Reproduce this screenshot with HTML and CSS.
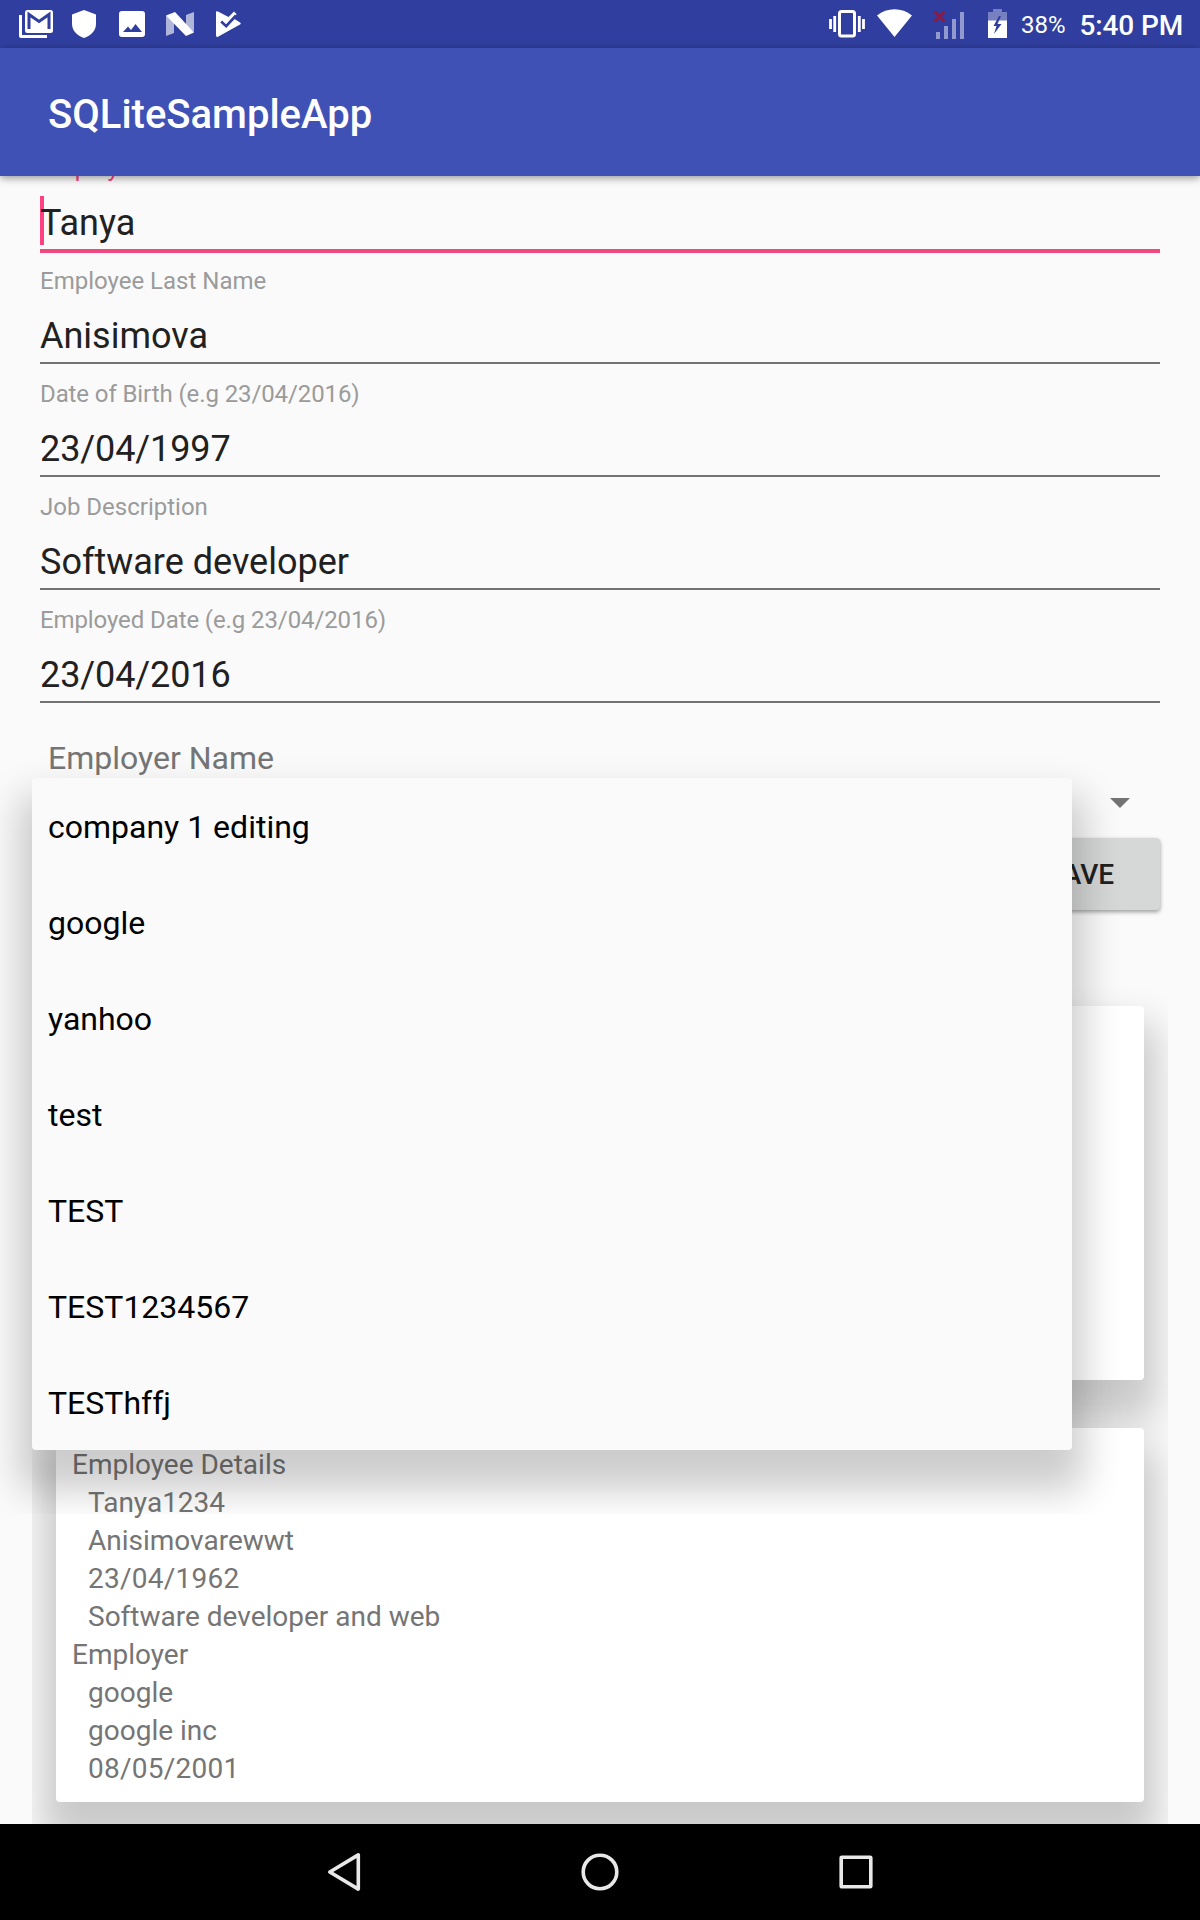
FILE: index.html
```html
<!DOCTYPE html>
<html lang="en">
<head>
<meta charset="utf-8">
<title>SQLiteSampleApp</title>
<link rel="stylesheet" href="styles.css">
</head>
<body>
<div class="screen">
  <header class="status-bar">
    <div class="notifications">
      <svg width="34" height="28" viewBox="0 0 34 28"><path d="M0 5h3v20h25v3H2a2 2 0 0 1-2-2z" fill="#fff"/><rect x="6" width="28" height="23" rx="2.5" fill="#fff"/><path d="M10 19V4.500L20 11.500 30 4.500V19" fill="none" stroke="#303f9f" stroke-width="3"/></svg>
      <svg width="24" height="28" viewBox="0 0 24 28"><path d="M12 0 24 4.500V14c0 6.500-5 11.500-12 14C5 25.500 0 20.500 0 14V4.500z" fill="#fff"/></svg>
      <svg width="26" height="26" viewBox="0 0 26 26"><path fill-rule="evenodd" d="M3 0h20a3 3 0 0 1 3 3v20a3 3 0 0 1-3 3H3a3 3 0 0 1-3-3V3a3 3 0 0 1 3-3zM4 21h19l-6.500-8-4.500 6-3-3.500z" fill="#fff"/></svg>
      <svg width="28" height="24" viewBox="0 0 28 24"><path d="M0 3.500 8 10v11l-8 3zM28 0v20l-8-6V3z" fill="#fff" opacity=".62"/><path d="M0 3.500 9 0l19 20.500L20 24z" fill="#fff"/></svg>
      <svg width="25" height="26" viewBox="0 0 25 26"><path d="M0 1.500Q0-.5 2 .6L12.500 6 18 .6 20.500 3 18.500 8 24 11.500q1.500 1 0 2L2 25.700q-2 .8-2-1.700z" fill="#fff"/><path d="m5.200 10.500 5 4.700L20 4.500" fill="none" stroke="#303f9f" stroke-width="2.700"/></svg>
    </div>
    <div class="system">
      <svg class="vibrate" width="36" height="28" viewBox="0 0 36 28"><rect x="10.500" y="1.500" width="15" height="24.500" rx="2" fill="none" stroke="#fff" stroke-width="3"/><path d="M1.500 9v10M5.700 6v16M30.300 6v16M34.500 9v10" stroke="#fff" stroke-width="2.800"/></svg>
      <svg class="wifi" width="35" height="28" viewBox="0 0 35 28"><path d="M0 6.500C10-2 25-2 35 6.500L17.500 28z" fill="#fff"/></svg>
      <svg class="signal" width="32" height="30" viewBox="0 0 32 30"><path d="M3 22h4v7H3zM11 16h4v13h-4zM19 9h4v20h-4zM27 2h4v27h-4z" fill="#9199cf"/><path d="m1.500 1.500 10 10m0-10-10 10" stroke="#861c49" stroke-width="3.200"/></svg>
      <svg class="battery" width="19" height="29" viewBox="0 0 19 29"><path d="M0 3h5V0h9v3h5v10H0z" fill="#7780c0"/><path d="M0 11.500h19V29H0z" fill="#fff"/><path d="M11 7 5.500 17h3l-2.500 8 7.500-10h-4L13 7z" fill="#303f9f"/></svg>
      <span class="percent">38%</span>
      <span class="clock">5:40 PM</span>
    </div>
  </header>
  <h1 class="app-bar">SQLiteSampleApp</h1>
  <main class="content">
    <form class="form">
      <label class="field focused"><span class="hint">Employee First Name</span><span class="value">Tanya</span></label>
      <label class="field"><span class="hint">Employee Last Name</span><span class="value">Anisimova</span></label>
      <label class="field date"><span class="hint">Date of Birth (e.g 23/04/2016)</span><span class="value">23/04/1997</span></label>
      <label class="field"><span class="hint">Job Description</span><span class="value">Software developer</span></label>
      <label class="field date"><span class="hint">Employed Date (e.g 23/04/2016)</span><span class="value">23/04/2016</span></label>
      <div class="employer-label">Employer Name</div>
      <div class="spinner"><svg width="20" height="10" viewBox="0 0 20 10"><path d="M0 0h20L10 10z" fill="#737373"/></svg></div>
      <button class="save" type="button">SAVE</button>
    </form>
    <section class="list">
      <article class="card"></article>
      <article class="card">
        <div>Employee Details</div>
        <div class="detail">Tanya1234</div>
        <div class="detail">Anisimovarewwt</div>
        <div class="detail day">23/04/1962</div>
        <div class="detail">Software developer and web</div>
        <div>Employer</div>
        <div class="detail">google</div>
        <div class="detail">google inc</div>
        <div class="detail day">08/05/2001</div>
      </article>
    </section>
  </main>
  <nav class="nav-bar">
    <svg width="40" height="40" viewBox="0 0 40 40"><path d="M34.300 2.900v34.200L5.800 20z"/></svg>
    <svg width="40" height="40" viewBox="0 0 40 40"><circle cx="20" cy="20" r="16.800"/></svg>
    <svg width="40" height="40" viewBox="0 0 40 40"><rect x="5.200" y="5.200" width="29.600" height="29.600" rx=".6"/></svg>
  </nav>
  <ul class="dropdown">
    <li>company 1 editing</li>
    <li>google</li>
    <li>yanhoo</li>
    <li>test</li>
    <li>TEST</li>
    <li>TEST1234567</li>
    <li>TESThffj</li>
  </ul>
</div>
</body>
</html>
```
FILE: styles.css
```css
* { box-sizing: border-box; }

body {
  margin: 0;
  font-family: Roboto, "Liberation Sans", sans-serif;
}

.screen {
  position: relative;
  display: flex;
  flex-direction: column;
  width: 1200px;
  height: 1920px;
  overflow: hidden;
  background: #fafafa;
}

svg { display: block; flex: none; }

.status-bar {
  display: flex;
  justify-content: space-between;
  height: 48px;
  padding: 0 17px 0 19px;
  background: #303f9f;
  color: #fff;
}

.notifications,
.system { display: flex; align-items: center; }

.notifications { gap: 21px; }
.notifications svg:first-child { margin-right: -2px; }
.notifications svg:nth-child(3) { margin-left: 2px; }
.notifications svg:last-child { margin-left: 1px; }

.wifi { margin: -2px 0 0 12px; }
.signal { margin: 2px 0 0 21px; }
.battery { margin: -1px 0 0 23px; }
.percent { margin-left: 14px; font-size: 24px; line-height: 28px; padding-top: 2px; }
.clock { margin-left: 14px; font-size: 28px; font-weight: 500; line-height: 33px; padding-top: 2px; letter-spacing: -.15px; }

.app-bar {
  position: relative;
  z-index: 1;
  height: 128px;
  margin: 0;
  padding: 0 48px;
  background: #3f51b5;
  box-shadow: 0 2px 8px rgba(0, 0, 0, .42);
  color: #fff;
  font-size: 40px;
  font-weight: 500;
  line-height: 134px;
}

.content { height: 1648px; overflow: hidden; }

.form {
  display: flex;
  flex-direction: column;
  margin-top: -38px;
  padding: 0 40px;
}

.field {
  display: flex;
  flex-direction: column;
  height: 113px;
  padding-top: 16px;
  border-bottom: 2px solid #737373;
}

.hint {
  color: #9b9b9b;
  font-size: 24px;
  line-height: 28px;
}

.value {
  margin-top: 20px;
  color: #212121;
  font-size: 36px;
  line-height: 42px;
}

.date .hint,
.date .value { letter-spacing: -.1px; }

.focused { border-color: #f04880; box-shadow: 0 2px #f04880; }
.focused .hint { color: #ff4081; }
.focused .value {
  height: 56px;
  margin-top: 13px;
  padding-top: 7px;
  background: linear-gradient(#ff4081, #ff4081) no-repeat 0 1px / 4px 49px;
}

.employer-label {
  margin-top: 36px;
  padding-left: 8px;
  color: #757575;
  font-size: 32px;
  line-height: 38px;
}

.spinner {
  display: flex;
  align-items: center;
  justify-content: flex-end;
  height: 52px;
  margin-bottom: 9px;
  padding-right: 30px;
}

.save {
  align-self: flex-end;
  width: 160px;
  height: 72px;
  padding: 2px 0 0;
  border: 0;
  border-radius: 4px;
  background: #d6d7d7;
  box-shadow: 0 2px 4px rgba(0, 0, 0, .38);
  color: #212121;
  font: 500 28px/70px Roboto, "Liberation Sans", sans-serif;
}

.list {
  display: flex;
  flex-direction: column;
  gap: 48px;
  height: 858px;
  margin: 56px 32px 0;
  padding: 40px 24px 0;
  overflow: hidden;
}

.card,
.dropdown {
  border-radius: 4px;
  box-shadow: 0 29px 38px 12px rgba(0, 0, 0, .2);
}

.card {
  flex: none;
  height: 374px;
  padding: 18px 16px 14px;
  background: #fff;
  color: #757575;
  font-size: 28px;
  line-height: 38px;
}

.detail { padding-left: 16px; }
.day { letter-spacing: .25px; }

.dropdown {
  position: absolute;
  z-index: 2;
  top: 778px;
  left: 32px;
  width: 1040px;
  margin: 0;
  padding: 0;
  background: #fafafa;
  clip-path: inset(-30px -64px -64px -32px);
  list-style: none;
}

.dropdown li {
  height: 96px;
  padding-left: 16px;
  color: #000;
  font-size: 32px;
  line-height: 98px;
}

.nav-bar {
  display: flex;
  align-items: center;
  justify-content: center;
  gap: 216px;
  height: 96px;
  background: #000;
}

.nav-bar svg {
  fill: none;
  stroke: #e8e8e8;
  stroke-width: 3.6;
  stroke-linejoin: round;
}
```
